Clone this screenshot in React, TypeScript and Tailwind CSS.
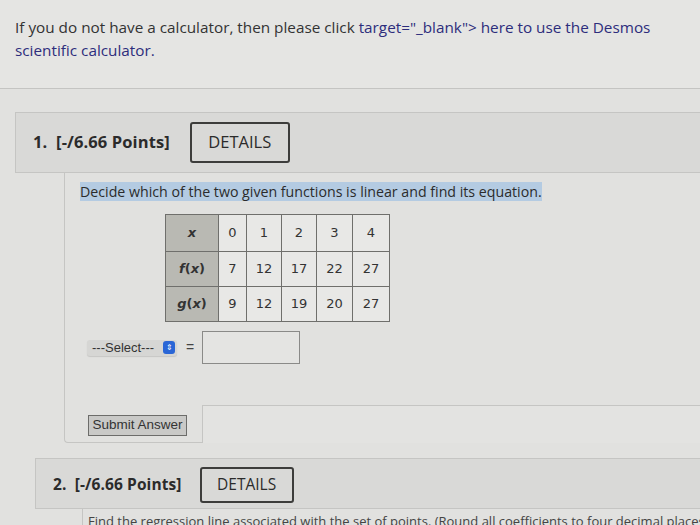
import React from "react";

const cellCls = "border border-[#6f6f6c] text-center text-[13px] text-[#333]";

export default function App() {
  const xs = ["0", "1", "2", "3", "4"];
  const fs = ["7", "12", "17", "22", "27"];
  const gs = ["9", "12", "19", "20", "27"];
  const widths = ["w-[28px]", "w-[35px]", "w-[35px]", "w-[36px]", "w-[37px]"];
  return (
    <div className="w-[700px] h-[525px] overflow-hidden bg-[#e1e1df] text-[#333]" style={{ fontFamily: '"Open Sans", sans-serif' }}>
      <div className="h-[89px] px-[15px] pt-[16px] text-[15.3px] leading-[23px] bg-[#e5e5e3] border-b border-[#c4c4c2]">
        If you do not have a calculator, then please click{" "}
        <span className="text-[#2d2d7c]">target="_blank"&gt; here to use the Desmos scientific calculator.</span>
      </div>

      <div className="ml-[15px] mt-[23px] h-[61px] bg-[#d9d9d7] border-t border-l border-b border-[#c5c5c3] flex items-center pl-[17px]">
        <span className="text-[16.5px] font-bold text-[#2b2b2b] tracking-[0.1px]">1.&nbsp; [-/6.66 Points]</span>
        <div className="ml-[20px] w-[100px] h-[41px] border-2 border-[#3d3d3b] rounded-[3px] flex items-center justify-center text-[16.5px] text-[#2b2b2b]">
          DETAILS
        </div>
      </div>

      <div className="relative ml-[64px] h-[270px] border-l border-b border-[#c5c5c3] rounded-bl-[4px]">
        <div className="pt-[10px] pl-[15px] text-[14.2px] leading-[18px]">
          <span className="bg-[#b4cbe2] text-[#2b2b2b]">Decide which of the two given functions is linear and find its equation.</span>
        </div>
        <div className="ml-[100px] mt-[13px]">
          <table className="border-collapse border border-[#6f6f6c]" style={{ fontFamily: '"DejaVu Sans", sans-serif' }}>
            <tbody>
              <tr className="h-[37px]">
                <td className={cellCls + " w-[53px] bg-[#b9b9b3] italic font-bold"}>x</td>
                {xs.map((v, i) => (
                  <td key={i} className={cellCls + " " + widths[i] + " bg-[#e8e8e6]"}>{v}</td>
                ))}
              </tr>
              <tr className="h-[35px]">
                <td className={cellCls + " bg-[#b9b9b3] font-bold"}><i>f</i>(<i>x</i>)</td>
                {fs.map((v, i) => (
                  <td key={i} className={cellCls + " bg-[#e8e8e6]"}>{v}</td>
                ))}
              </tr>
              <tr className="h-[35px]">
                <td className={cellCls + " bg-[#b9b9b3] font-bold"}><i>g</i>(<i>x</i>)</td>
                {gs.map((v, i) => (
                  <td key={i} className={cellCls + " bg-[#e8e8e6]"}>{v}</td>
                ))}
              </tr>
            </tbody>
          </table>
        </div>
        <div className="flex items-center mt-[9px] ml-[22px]" style={{ fontFamily: '"Liberation Sans", sans-serif' }}>
          <div className="flex items-center h-[16px] bg-[#d6d6d4] rounded-[3px] pl-[5px] pr-[2px] text-[13px] text-[#333] shadow-[0_1px_1px_rgba(0,0,0,0.12)]">
            ---Select---
            <span className="ml-[9px] w-[12px] h-[13px] rounded-[3px] bg-[#2a66d6] text-white flex items-center justify-center text-[8px] leading-none">⇕</span>
          </div>
          <span className="ml-[9px] text-[14px] text-[#444]">=</span>
          <div className="ml-[8px] w-[98px] h-[33px] border border-[#8a8a88] bg-[#e4e4e2]"></div>
        </div>
        <div className="mt-[51px] ml-[23px] w-[99px] h-[21px] bg-[#c9c9c7] border border-[#6c6c6a] flex items-center justify-center text-[13.5px] text-[#333]" style={{ fontFamily: '"Liberation Sans", sans-serif' }}>
          Submit Answer
        </div>
        <div className="absolute left-[137px] right-0 top-[232px] bottom-[-1px] border-t border-l border-[#c5c5c3] bg-[#e3e3e1]"></div>
      </div>

      <div className="ml-[35px] mt-[15px] h-[51px] bg-[#d9d9d7] border-t border-l border-b border-[#c5c5c3] flex items-center pl-[17px] pt-[2px]">
        <span className="text-[15.5px] font-bold text-[#2b2b2b] tracking-[0.1px]">2.&nbsp; [-/6.66 Points]</span>
        <div className="ml-[18px] w-[94px] h-[36px] border-2 border-[#3d3d3b] rounded-[3px] flex items-center justify-center text-[15.5px] text-[#2b2b2b]">
          DETAILS
        </div>
      </div>
      <div className="ml-[82px] h-[20px] border-l border-[#c5c5c3] pl-[5px] pt-[3px] text-[13px] whitespace-nowrap text-[#444]">
        Find the regression line associated with the set of points. (Round all coefficients to four decimal places.)
      </div>
    </div>
  );
}
